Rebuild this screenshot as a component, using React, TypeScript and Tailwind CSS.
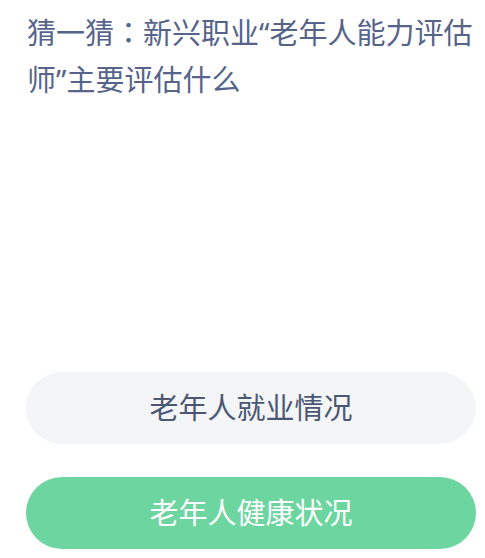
export default function App() {
  return (
    <div
      className="flex h-[558px] w-[485px] flex-col bg-white pl-[26px] pr-[9px]"
      style={{ fontFamily: '"Noto Sans", "Noto Sans CJK SC", sans-serif' }}
    >
      <h1 className="mt-[8px] pl-px text-[29px] font-normal leading-[47px] text-[#56648a]">
        猜一猜
        <span style={{ fontFamily: '"Noto Sans CJK TC", sans-serif' }}>：</span>
        新兴职业“老年人能力评估师”主要评估什么
      </h1>
      <div className="mt-auto mb-[9px] flex flex-col gap-[33px]">
        <button className="flex h-[72px] w-full items-center justify-center rounded-full bg-[#f4f5f7] text-[29px] text-[#4c5873]">
          老年人就业情况
        </button>
        <button className="flex h-[72px] w-full items-center justify-center rounded-full bg-[#6dd6a0] text-[29px] text-white">
          老年人健康状况
        </button>
      </div>
    </div>
  );
}
